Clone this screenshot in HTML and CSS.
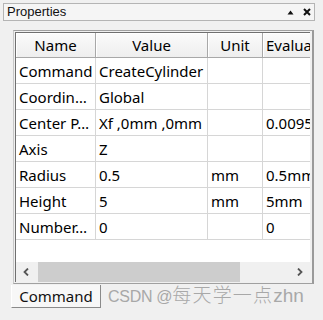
FILE: index.html
```html
<!DOCTYPE html>
<html lang="en">
<head>
    <meta charset="UTF-8">
    <title>Properties</title>
    <link rel="stylesheet" href="styles.css">
</head>
<body>
    <div class="titlebar">
        <span class="title">Properties</span>
        <span class="title-buttons">
            <svg width="7" height="5" viewBox="0 0 7 5"><path d="M3.5 0.5 L6.5 4.5 L0.5 4.5 Z" fill="#111"/></svg>
            <svg width="8" height="8" viewBox="0 0 8 8"><path d="M1 1 L7 7 M7 1 L1 7" stroke="#111" stroke-width="2"/></svg>
        </span>
    </div>

    <div class="frame">
        <div class="view">
            <div class="grid-clip">
                <table class="props">
                    <colgroup>
                        <col class="c-name">
                        <col class="c-value">
                        <col class="c-unit">
                        <col class="c-eval">
                    </colgroup>
                    <thead>
                        <tr><th>Name</th><th>Value</th><th>Unit</th><th>Evaluate</th></tr>
                    </thead>
                    <tbody>
                        <tr><td>Command</td><td>CreateCylinder</td><td></td><td></td></tr>
                        <tr><td>Coordin…</td><td>Global</td><td></td><td></td></tr>
                        <tr><td>Center P…</td><td>Xf ,0mm ,0mm</td><td></td><td>0.0095mm</td></tr>
                        <tr><td>Axis</td><td>Z</td><td></td><td></td></tr>
                        <tr><td>Radius</td><td>0.5</td><td>mm</td><td>0.5mm</td></tr>
                        <tr><td>Height</td><td>5</td><td>mm</td><td>5mm</td></tr>
                        <tr><td>Number…</td><td>0</td><td></td><td>0</td></tr>
                    </tbody>
                </table>
            </div>
            <div class="hscroll">
                <div class="sbtn">
                    <svg width="6" height="8" viewBox="0 0 6 8"><path d="M5 0.5 L1.5 4 L5 7.5" fill="none" stroke="#555" stroke-width="1.8"/></svg>
                </div>
                <div class="track"><div class="thumb"></div></div>
                <div class="sbtn">
                    <svg width="6" height="8" viewBox="0 0 6 8"><path d="M1 0.5 L4.5 4 L1 7.5" fill="none" stroke="#555" stroke-width="1.8"/></svg>
                </div>
            </div>
        </div>
    </div>

    <div class="bottom">
        <div class="tab">Command</div>
        <div class="watermark"><span class="wm-latin">CSDN @</span><span class="wm-cjk">每天学一点</span><span class="wm-latin2">zhn</span></div>
    </div>
</body>
</html>
```

FILE: styles.css
```css
body {
    margin: 0;
    background-color: #f0f0f0;
    font-family: "Noto Sans", "Liberation Sans", sans-serif;
    color: #000;
    width: 323px;
    height: 320px;
    overflow: hidden;
}

/* title bar */
.titlebar {
    margin: 3px 8px 0 3px;
    height: 16px;
    border: 1px solid #b4b4b4;
    background-color: #f5f5f5;
    display: flex;
    align-items: center;
    justify-content: space-between;
    padding: 0 3px 0 3px;
}
.title {
    font-family: "Liberation Sans", sans-serif;
    font-size: 13px;
    line-height: 16px;
    color: #111;
}
.title-buttons {
    display: flex;
    align-items: center;
    gap: 9px;
}

/* property frame */
.frame {
    margin: 9px 0 0 13px;
    width: 295px;
    border-top: 1px solid #a0a0a0;
    border-left: 1px solid #c8c8c8;
    border-bottom: 1px solid #a0a0a0;
    border-right: 2px solid #9a9a9a;
    padding: 1px 2px 1px 1px;
}
.view {
    border-top: 1px solid #707070;
    border-left: 1px solid #707070;
    background-color: #fff;
    height: 249px;
    display: flex;
    flex-direction: column;
}
.grid-clip {
    flex: 1;
    overflow: hidden;
}
.props {
    border-collapse: separate;
    border-spacing: 0;
    table-layout: fixed;
    width: 318px;
    font-size: 15px;
}
.c-name { width: 80px; }
.c-value { width: 112px; }
.c-unit { width: 55px; }
.c-eval { width: 71px; }

.props th {
    height: 24px;
    font-weight: normal;
    text-align: center;
    background: linear-gradient(#fbfbfb, #eeeeee);
    border-right: 1px solid #a8a8a8;
    border-bottom: 1px solid #a8a8a8;
    box-shadow: inset 1px 1px 0 #fff;
    padding: 0;
    white-space: nowrap;
    overflow: hidden;
}
.props th:last-child {
    text-align: left;
    padding-left: 3px;
}
.props td {
    height: 24px;
    padding: 1px 0 0 3px;
    border-right: 1px solid #d6d6d6;
    border-bottom: 1px solid #d6d6d6;
    white-space: nowrap;
    overflow: hidden;
    line-height: 22px;
}

/* horizontal scroll bar */
.hscroll {
    height: 20px;
    display: flex;
    background-color: #f0f0f0;
}
.sbtn {
    width: 20px;
    display: flex;
    align-items: center;
    justify-content: center;
}
.track {
    flex: 1;
    display: flex;
    align-items: stretch;
}
.thumb {
    margin-left: 2px;
    width: 202px;
    background-color: #cdcdcd;
}

/* bottom tab + watermark */
.bottom {
    display: flex;
    align-items: flex-end;
    margin-top: -1px;
}
.tab {
    margin-left: 11px;
    width: 88px;
    height: 22px;
    background-color: #f7f7f7;
    border-left: 1px solid #fff;
    border-right: 1px solid #8a8a8a;
    border-bottom: 1px solid #8a8a8a;
    font-size: 15px;
    line-height: 22px;
    text-align: center;
    color: #111;
}
.watermark {
    margin-left: 7px;
    color: #a8a8a8;
    white-space: nowrap;
    line-height: 22px;
    font-family: "Liberation Sans", "Noto Sans CJK SC", sans-serif;
}
.wm-latin {
    font-size: 16px;
    letter-spacing: -0.3px;
}
.wm-cjk {
    font-family: "Noto Sans CJK SC", sans-serif;
    font-weight: 300;
    font-size: 19px;
    letter-spacing: 1.2px;
}
.wm-latin2 {
    font-size: 19px;
}
```
